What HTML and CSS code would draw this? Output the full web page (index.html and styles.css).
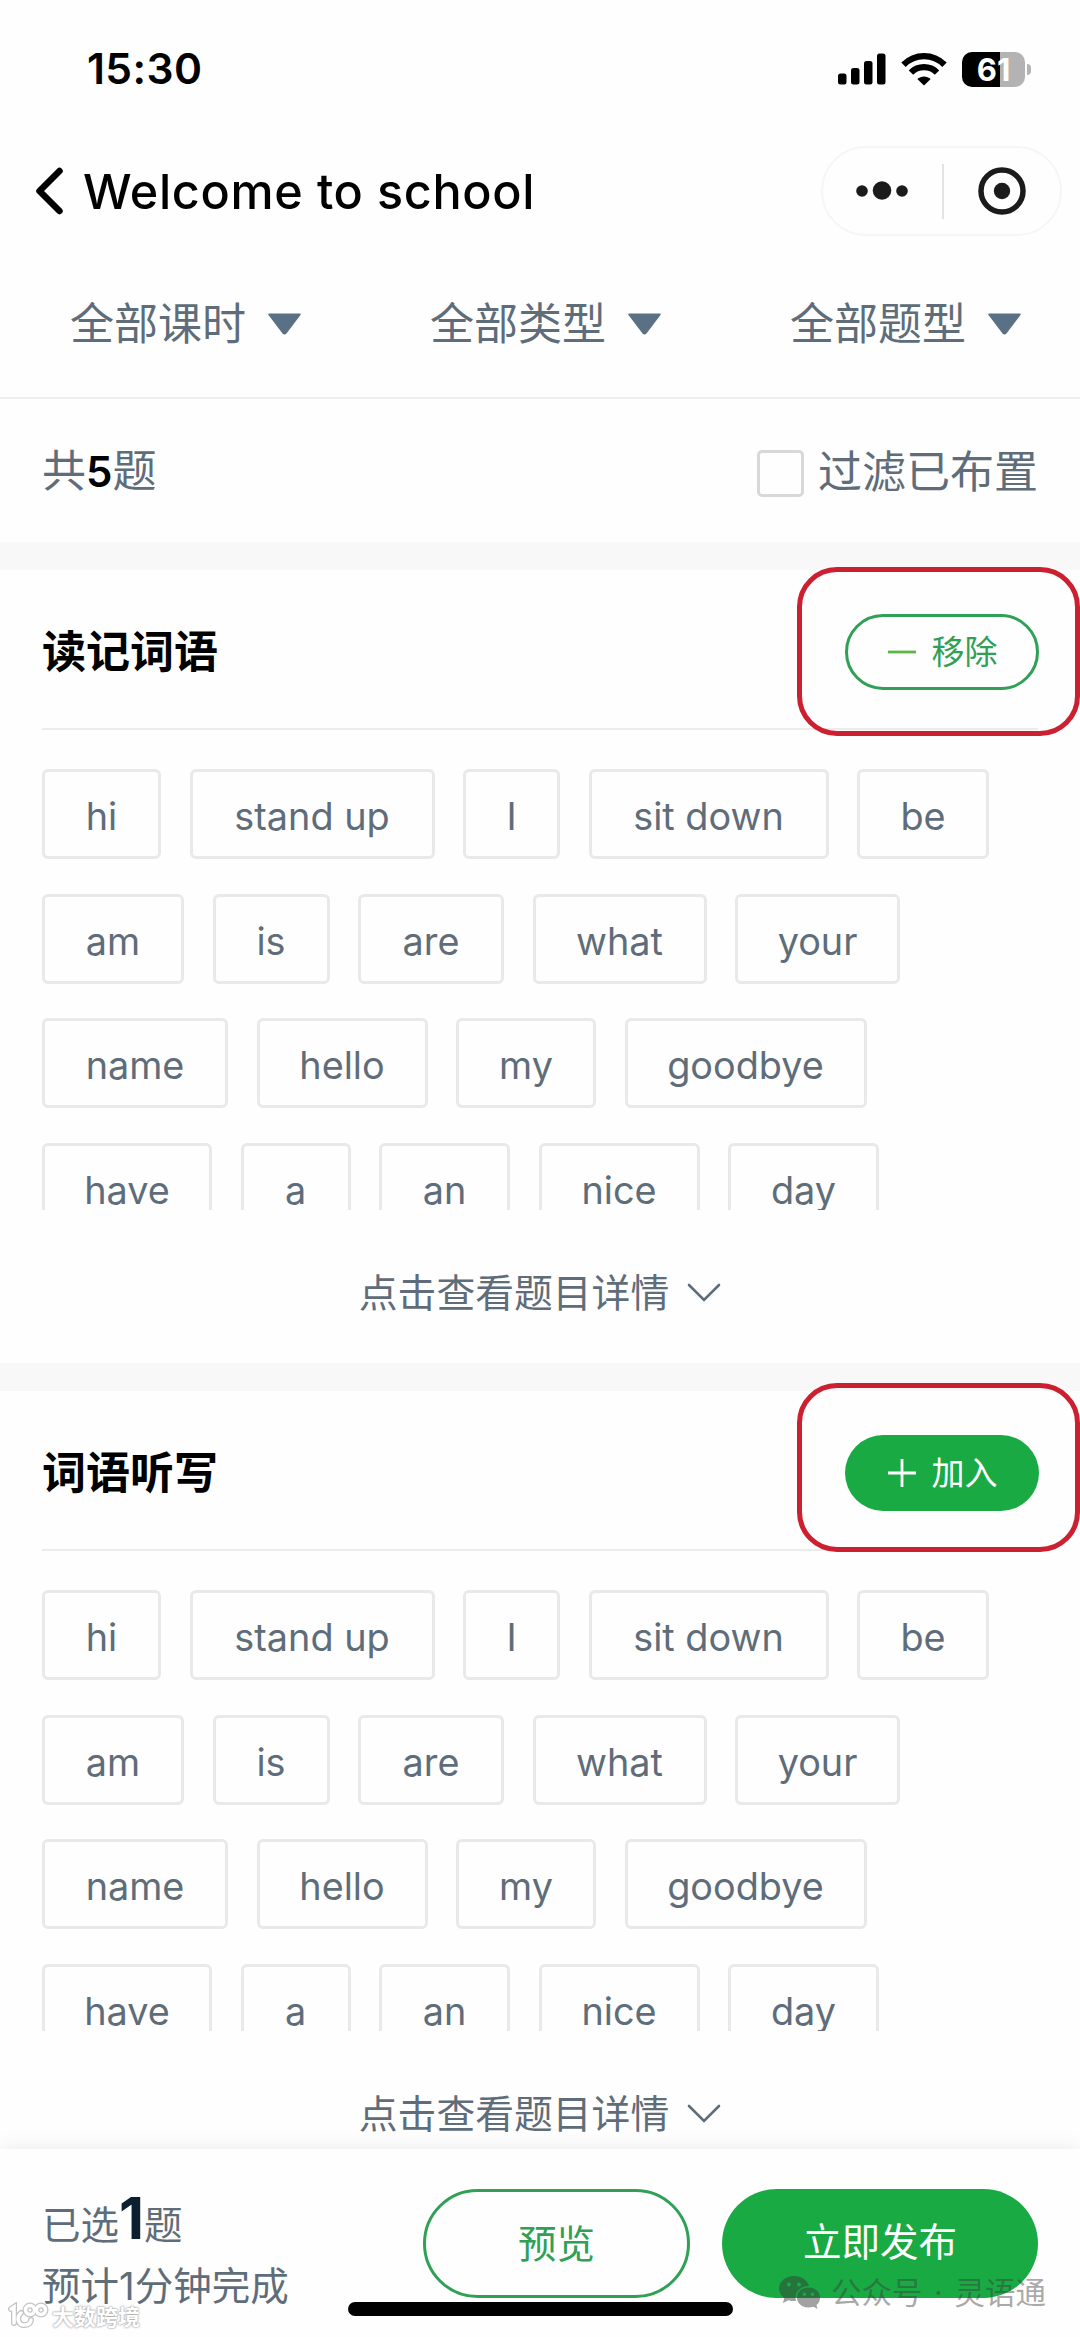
FILE: index.html
```html
<!DOCTYPE html>
<html lang="zh-CN">
<head>
<meta charset="utf-8">
<title>Welcome to school</title>
<link rel="stylesheet" href="styles.css">
</head>
<body>
<div class="screen">
  <div class="status">
    <span class="time">15:30</span>
    <div class="status-icons">
      <svg width="48" height="32" viewBox="0 0 48 32"><rect x="0" y="20.500" width="8.500" height="11" rx="2.500"/><rect x="13" y="15" width="8.500" height="16.500" rx="2.500"/><rect x="26" y="8" width="8.500" height="23.500" rx="2.500"/><rect x="39" y="0.500" width="8.500" height="31" rx="2.500"/></svg>
      <svg width="46" height="34" viewBox="0 0 46 34"><g fill="none" stroke="#000" stroke-width="6.200"><path d="M2.500 12.800C14 1.300 32 1.300 43.500 12.800"/><path d="M10 20.600C17 13.400 29 13.400 36 20.600"/></g><path d="M23 33.500L16.300 27C20 23.500 26 23.500 29.700 27Z"/></svg>
      <div class="battery"><span>61</span></div>
      <i class="battery-tip"></i>
    </div>
  </div>

  <header class="nav">
    <svg class="back" width="28" height="48" viewBox="0 0 28 48"><path d="M24.500 4L4.500 24L24.500 44" fill="none" stroke="#000" stroke-width="6.500" stroke-linecap="round" stroke-linejoin="round"/></svg>
    <h1>Welcome to school</h1>
    <div class="capsule">
      <svg width="52" height="20" viewBox="0 0 52 20"><circle cx="6" cy="10" r="5.800"/><circle cx="26" cy="9.500" r="9.300"/><circle cx="46" cy="10" r="5.800"/></svg>
      <i></i>
      <svg width="48" height="48" viewBox="0 0 48 48"><circle cx="24" cy="24" r="21" fill="none" stroke="#1b1b1b" stroke-width="5.500"/><circle cx="24" cy="24" r="8.200"/></svg>
    </div>
  </header>

  <nav class="filters">
    <div>全部课时<svg width="33" height="22" viewBox="0 0 33 22"><path d="M1 .5H32Q33 .5 32.500 2L18.500 20.500Q16.500 22.500 14.500 20.500L.5 2Q0 .5 1 .5Z"/></svg></div>
    <div>全部类型<svg width="33" height="22" viewBox="0 0 33 22"><path d="M1 .5H32Q33 .5 32.500 2L18.500 20.500Q16.500 22.500 14.500 20.500L.5 2Q0 .5 1 .5Z"/></svg></div>
    <div>全部题型<svg width="33" height="22" viewBox="0 0 33 22"><path d="M1 .5H32Q33 .5 32.500 2L18.500 20.500Q16.500 22.500 14.500 20.500L.5 2Q0 .5 1 .5Z"/></svg></div>
  </nav>

  <div class="summary">
    <span>共<b>5</b>题</span>
    <label><i class="checkbox"></i>过滤已布置</label>
  </div>

  <section class="card">
    <div class="card-head">
      <h2>读记词语</h2>
      <button class="pill pill-outline"><svg width="30" height="30" viewBox="0 0 30 30"><path d="M1 15H29" stroke="#5cb545"/></svg>移除</button>
      <div class="mark"></div>
    </div>
    <div class="words">
      <div class="row"><span style="width:119px">hi</span><span style="width:245px">stand up</span><span style="width:97px">I</span><span style="width:240px">sit down</span><span style="width:132px">be</span></div>
      <div class="row"><span style="width:142px">am</span><span style="width:117px">is</span><span style="width:146px">are</span><span style="width:174px">what</span><span style="width:165px">your</span></div>
      <div class="row"><span style="width:186px">name</span><span style="width:171px">hello</span><span style="width:140px">my</span><span style="width:242px">goodbye</span></div>
      <div class="row"><span style="width:170px">have</span><span style="width:110px">a</span><span style="width:131px">an</span><span style="width:161px">nice</span><span style="width:151px">day</span></div>
    </div>
    <div class="more">点击查看题目详情<svg width="34" height="20" viewBox="0 0 34 20"><path d="M2 2L17 17L32 2"/></svg></div>
  </section>

  <section class="card">
    <div class="card-head">
      <h2>词语听写</h2>
      <button class="pill pill-solid"><svg width="30" height="30" viewBox="0 0 30 30"><path d="M1 15H29M15 1V29" stroke="#fff"/></svg>加入</button>
      <div class="mark mark-raised"></div>
    </div>
    <div class="words">
      <div class="row"><span style="width:119px">hi</span><span style="width:245px">stand up</span><span style="width:97px">I</span><span style="width:240px">sit down</span><span style="width:132px">be</span></div>
      <div class="row"><span style="width:142px">am</span><span style="width:117px">is</span><span style="width:146px">are</span><span style="width:174px">what</span><span style="width:165px">your</span></div>
      <div class="row"><span style="width:186px">name</span><span style="width:171px">hello</span><span style="width:140px">my</span><span style="width:242px">goodbye</span></div>
      <div class="row"><span style="width:170px">have</span><span style="width:110px">a</span><span style="width:131px">an</span><span style="width:161px">nice</span><span style="width:151px">day</span></div>
    </div>
    <div class="more">点击查看题目详情<svg width="34" height="20" viewBox="0 0 34 20"><path d="M2 2L17 17L32 2"/></svg></div>
  </section>

  <footer class="bar">
    <div class="picked">
      <p>已选<b>1</b>题</p>
      <p>预计1分钟完成</p>
    </div>
    <button class="action preview">预览</button>
    <button class="action publish">立即发布</button>
    <div class="home"></div>
    <div class="credit">
      <svg width="42" height="34" viewBox="0 0 42 34"><path fill-rule="evenodd" d="M15 0C6.500 0 0 5.500 0 12.500C0 16.500 2 19.700 5.200 22L4 27L9.500 24.200Q13 25.300 17 25C14.500 16 22 10 30 10C28.500 4 22.500 0 15 0ZM10 6.500a2 2 0 1 1 0 4a2 2 0 1 1 0-4ZM20 6.500a2 2 0 1 1 0 4a2 2 0 1 1 0-4Z"/><path fill-rule="evenodd" d="M29.500 11.500C22.500 11.500 18 16 18 21.500C18 27 22.500 31.500 29.500 31.500Q32 31.500 34.500 30.700L38.500 33L37.500 29C40 27 41 24.500 41 21.500C41 16 36.500 11.500 29.500 11.500ZM25.500 16.500a1.700 1.700 0 1 1 0 3.400a1.700 1.700 0 1 1 0-3.400ZM33.500 16.500a1.700 1.700 0 1 1 0 3.400a1.700 1.700 0 1 1 0-3.400Z"/></svg>
      <span>公众号 · 灵语通</span>
    </div>
    <div class="stamp">
      <svg width="42" height="30" viewBox="0 0 42 30"><g fill="none" stroke-linecap="round"><g stroke="#c4c4c4" stroke-width="6"><path d="M3 7L6 5V21M13 11C8 15 10 24 17 23C21 23 23 20 23 18"/><circle cx="22" cy="8" r="4.500"/><circle cx="33" cy="8" r="4.500"/></g><g stroke="#fff" stroke-width="3.500"><path d="M3 7L6 5V21M13 11C8 15 10 24 17 23C21 23 23 20 23 18"/><circle cx="22" cy="8" r="4.500"/><circle cx="33" cy="8" r="4.500"/></g></g></svg>
      <span>大数跨境</span>
    </div>
  </footer>
</div>
</body>
</html>
```

FILE: styles.css
```css
* { box-sizing: border-box; margin: 0; padding: 0; }
body { background: #fff; font-family: Inter, "Noto Sans CJK SC", sans-serif; color: #5f6d7a; }
svg { display: block; flex: none; }
button { font-family: inherit; background: none; border: 0; }
.screen { position: relative; width: 1080px; height: 2337px; overflow: hidden; display: flex; flex-direction: column; background: #fefefe; }

.status { height: 136px; flex: none; display: flex; justify-content: space-between; padding: 0 49px 0 87px; }
.time { margin-top: 43px; font-size: 42.500px; line-height: 52px; font-weight: 600; letter-spacing: .4px; color: #000; }
.status-icons { display: flex; height: 36px; margin-top: 51px; align-items: center; }
.status-icons svg + svg { margin: 0 15px; }
.battery { width: 63px; height: 35px; border-radius: 10px; background: linear-gradient(90deg, #000 61%, #b3b3b3 61%); color: #fff; font-size: 31px; font-weight: 700; line-height: 35px; text-align: center; }
.battery-tip { width: 4px; height: 11px; margin-left: 2px; border-radius: 0 5px 5px 0; background: #b3b3b3; }

.nav { height: 110px; flex: none; display: flex; align-items: center; padding: 0 18px 0 35px; }
.nav h1 { margin: 2px 0 0 20px; font-size: 48.500px; font-weight: 550; letter-spacing: .65px; color: #000; white-space: nowrap; line-height: 60px; }
.capsule { margin-left: auto; width: 241px; height: 90px; border: 2px solid #f6f6f6; border-radius: 45px; display: flex; align-items: center; padding: 0 34px 0 33px; justify-content: space-between; fill: #1b1b1b; }
.capsule i { width: 1.500px; height: 55px; background: #e3e3e3; }

.filters { height: 153px; flex: none; display: flex; border-bottom: 2px solid #eee; }
.filters div { width: 360px; height: 156px; display: flex; align-items: center; padding-left: 70px; font-size: 44px; line-height: 60px; }
.filters svg { margin-left: 22px; fill: #5a7084; }

.summary { height: 143px; flex: none; display: flex; justify-content: space-between; align-items: center; padding: 2px 42px 0; font-size: 44px; line-height: 60px; }
.summary b { color: #000; font-weight: 600; font-size: 42px; }
.summary label { display: flex; align-items: center; }
.checkbox { width: 47px; height: 47px; margin: 3px 14px 0 0; border: 3px solid #d8d8d8; border-radius: 5px; }

.card { height: 821px; flex: none; border-top: 28px solid #f8f8f8; padding: 0 42px; }
.card-head { position: relative; height: 160px; display: flex; align-items: center; justify-content: space-between; border-bottom: 2px solid #ececec; }
.card-head h2 { font-size: 44px; line-height: 60px; font-weight: 700; color: #000; padding-top: 5px; }
.pill { width: 194px; height: 76px; margin: 5px -1px 0 0; border-radius: 38px; display: flex; align-items: center; justify-content: center; gap: 15px; font-size: 33px; line-height: 44px; }
.pill svg { stroke-width: 2.800px; }
.pill-outline { border: 3px solid #2fa055; color: #2fa055; }
.pill-solid { background: #1aaa44; color: #fff; }
.mark { position: absolute; left: 755px; top: -3px; width: 283px; height: 169px; border: 5px solid #cc1f30; border-radius: 40px; }
.mark-raised { top: -8px; }
.words { height: 480px; padding-top: 39px; overflow: hidden; display: flex; flex-direction: column; gap: 34.700px; }
.row { display: flex; flex: none; gap: 28.500px; }
.row span { height: 90px; border: 3px solid #e9e9e9; border-radius: 6px; font-size: 37.800px; line-height: 89px; text-align: center; white-space: nowrap; }
.more { display: flex; justify-content: center; align-items: center; margin-top: 54px; font-size: 38.800px; line-height: 58px; }
.more svg { margin-left: 18px; fill: none; stroke: #5f6d7a; stroke-width: 2.600px; stroke-linecap: round; }

.bar { position: absolute; left: 0; right: 0; bottom: 0; height: 188px; background: #fefefe; box-shadow: 0 -2px 18px rgba(0,0,0,.07); display: flex; align-items: flex-start; padding: 40px 42px 0; }
.picked { width: 381px; font-size: 38.500px; white-space: nowrap; }
.picked p { height: 64px; line-height: 63px; }
.picked p + p { line-height: 66px; }
.picked b { font-size: 58px; font-weight: 700; color: #0b1f30; line-height: 1; }
.action { height: 109px; border-radius: 55px; font-size: 38.500px; line-height: 52px; }
.preview { width: 267px; margin-right: 32px; border: 3px solid #2fa055; color: #2fa055; }
.publish { width: 316px; background: #1aaa44; color: #fff; padding-bottom: 3px; }
.home { position: absolute; left: 348px; top: 153px; width: 385px; height: 14px; border-radius: 7px; background: #000; }
.credit { position: absolute; left: 779px; top: 127px; display: flex; gap: 10px; align-items: center; color: rgba(60,60,60,.45); fill: rgba(50,50,50,.45); font-size: 30.500px; line-height: 34px; word-spacing: 3px; white-space: nowrap; }
.stamp { position: absolute; left: 8px; top: 152px; display: flex; gap: 2px; align-items: center; font-size: 22px; line-height: 32px; color: #fff; font-weight: 700; text-shadow: 0 0 2px #999, 0 0 2px #aaa; }
```
